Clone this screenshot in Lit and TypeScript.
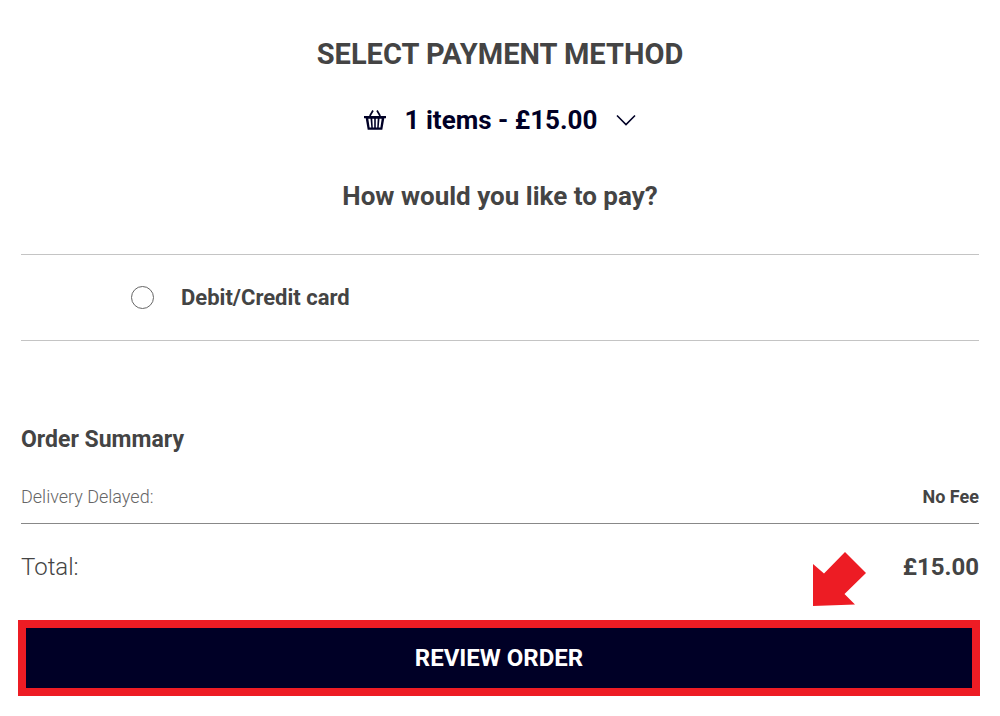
import { LitElement, html, css } from "lit";
import { customElement, property } from "lit/decorators.js";

@customElement("app-root")
export class AppRoot extends LitElement {
  @property() amount = "£15.00";

  static styles = css`
    :host {
      display: block;
      background: #fff;
      color: #444;
      font-family: "Roboto", sans-serif;
    }
    * { box-sizing: border-box; }
    main { padding: 32px 21px 20px; }
    h1, h2, h3, dl, dd, fieldset { margin: 0; }
    h1 { font-size: 29px; line-height: 44px; text-align: center; }
    .basket {
      display: flex;
      align-items: center;
      justify-content: center;
      gap: 19px;
      margin: 24px auto 0;
      padding: 0;
      border: 0;
      background: none;
      color: #000026;
      font: bold 26px/40px "Roboto", sans-serif;
    }
    .basket svg { display: block; }
    h2 { margin-top: 36px; font-size: 26px; line-height: 40px; text-align: center; }
    .methods {
      margin-top: 38px;
      padding: 0;
      border: 0;
      border-top: 1px solid #c4c4c4;
      border-bottom: 1px solid #c4c4c4;
    }
    .method {
      display: flex;
      align-items: center;
      gap: 27px;
      padding: 28px 0 28px 110px;
      font-size: 22px;
      line-height: 29px;
      font-weight: bold;
    }
    .method input {
      appearance: none;
      width: 23px;
      height: 23px;
      margin: 0;
      border: 1px solid #666;
      border-radius: 50%;
      background: #fff;
    }
    .method input:checked { border: 7px solid #000026; }
    h3 { margin-top: 84px; font-size: 23px; line-height: 30px; }
    .row { display: flex; justify-content: space-between; align-items: center; }
    .row dt { font-weight: 300; }
    .row dd { font-weight: bold; }
    .fee {
      margin-top: 26px;
      padding-bottom: 10px;
      border-bottom: 1px solid #888;
      font-size: 18px;
      line-height: 32px;
    }
    .fee dt { color: #666; }
    .total { margin-top: 23px; font-size: 24px; line-height: 40px; }
    .action { position: relative; margin: 33px -1px 0 -3px; }
    .review {
      display: block;
      width: 100%;
      padding: 10px;
      border: 8px solid #ed1c24;
      background: #000026;
      color: #fff;
      font: bold 24px/40px "Roboto", sans-serif;
    }
    .pointer { position: absolute; right: 114px; bottom: 90px; display: block; }
  `;

  render() {
    return html`
      <main>
        <h1>SELECT PAYMENT METHOD</h1>
        <button class="basket" type="button" aria-expanded="false">
          <svg width="22" height="22" viewBox="0 0 22 22" aria-hidden="true">
            <path d="M5.800 7L9 1.500M16.200 7L13 1.500" fill="none" stroke="currentColor" stroke-width="1.700" />
            <path fill="currentColor" fill-rule="evenodd" d="M0 7H22V9.300H20.300L18.300 20.800H3.700L1.700 9.300H0ZM4.300 9.800L5.600 18.500H7.300L6.500 9.800ZM8.300 9.800L8.800 18.500H10.200V9.800ZM11.800 9.800V18.500H13.200L13.700 9.800ZM15.500 9.800L14.700 18.500H16.400L17.700 9.800Z" />
          </svg>
          <span>1 items - ${this.amount}</span>
          <svg width="20" height="12" viewBox="0 0 20 12" aria-hidden="true">
            <path d="M1 1.500L10 10.500L19 1.500" fill="none" stroke="currentColor" stroke-width="1.600" />
          </svg>
        </button>
        <h2 id="pay">How would you like to pay?</h2>
        <fieldset class="methods" aria-labelledby="pay">
          <label class="method" for="card">
            <input id="card" type="radio" name="method" value="card" />
            <span>Debit/Credit card</span>
          </label>
        </fieldset>
        <h3>Order Summary</h3>
        <dl>
          <div class="row fee"><dt>Delivery Delayed:</dt><dd>No Fee</dd></div>
          <div class="row total"><dt>Total:</dt><dd>${this.amount}</dd></div>
        </dl>
        <div class="action">
          <svg class="pointer" width="53" height="54" viewBox="0 0 53 54" aria-hidden="true">
            <path d="M32 0L53 21L31.500 42L42 52.500L0 54V12L11 21.500Z" fill="#ed1c24" />
          </svg>
          <button class="review" type="button">REVIEW ORDER</button>
        </div>
      </main>
    `;
  }
}
